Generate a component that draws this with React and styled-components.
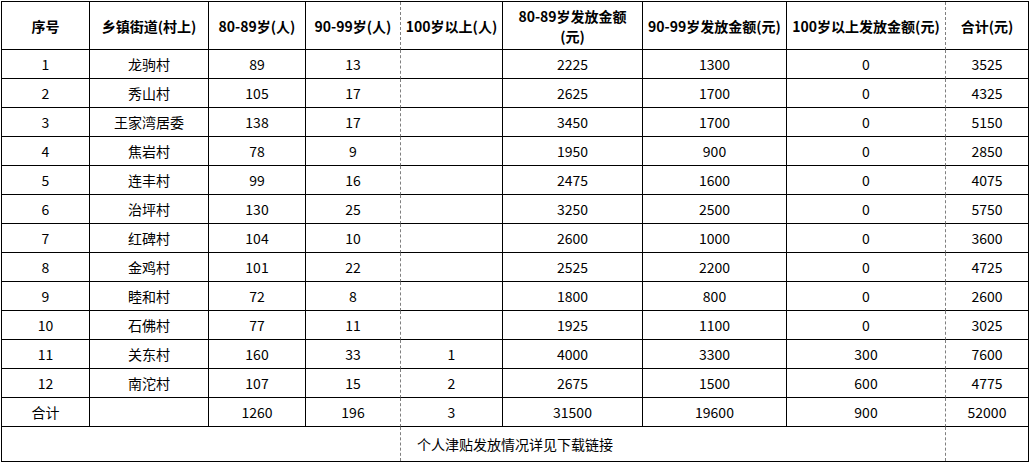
import React from "react";
import styled, { createGlobalStyle, css } from "styled-components";

const Global = createGlobalStyle`
  html, body { margin: 0; padding: 0; background: #ffffff; }
  body { font-family: "Noto Sans CJK SC", "Noto Sans", sans-serif; color: #000; }
`;

const Page = styled.div`
  padding: 1px 0 0 1px;
`;

const Sheet = styled.div`
  display: grid;
  grid-template-columns: 88px 119px 97px 95px 102px 140px 144px 159px 83px;
  width: max-content;
  border-top: 1px solid #000;
  border-left: 1px solid #000;
`;

const Cell = styled.div`
  box-sizing: border-box;
  height: ${(p) => (p.$head ? 48 : 29)}px;
  display: flex;
  align-items: center;
  justify-content: center;
  text-align: center;
  padding: 0 2px;
  font-size: 14px;
  line-height: 20px;
  white-space: nowrap;
  font-weight: ${(p) => (p.$head ? 700 : 400)};
  border-right: 1px solid #000;
  border-bottom: 1px solid #000;
  ${(p) =>
    p.$dashed &&
    css`
      border-right: 1px dashed #7f7f7f;
    `}
`;

const FootCell = styled.div`
  grid-column: 1 / -1;
  position: relative;
  box-sizing: border-box;
  height: 35px;
  display: flex;
  align-items: center;
  justify-content: center;
  font-size: 14px;
  border-right: 1px solid #000;
  border-bottom: 1px solid #000;
`;

const PageBreak = styled.span`
  position: absolute;
  top: 0;
  bottom: 0;
  left: ${(p) => p.$x}px;
  width: 0;
  border-left: 1px dashed #7f7f7f;
`;

const headers = [
  "序号",
  "乡镇街道(村上)",
  "80-89岁(人)",
  "90-99岁(人)",
  "100岁以上(人)",
  <>80-89岁发放金额<br />(元)</>,
  "90-99岁发放金额(元)",
  "100岁以上发放金额(元)",
  "合计(元)",
];

const rows = [
  [1, "龙驹村", 89, 13, "", 2225, 1300, 0, 3525],
  [2, "秀山村", 105, 17, "", 2625, 1700, 0, 4325],
  [3, "王家湾居委", 138, 17, "", 3450, 1700, 0, 5150],
  [4, "焦岩村", 78, 9, "", 1950, 900, 0, 2850],
  [5, "连丰村", 99, 16, "", 2475, 1600, 0, 4075],
  [6, "治坪村", 130, 25, "", 3250, 2500, 0, 5750],
  [7, "红碑村", 104, 10, "", 2600, 1000, 0, 3600],
  [8, "金鸡村", 101, 22, "", 2525, 2200, 0, 4725],
  [9, "睦和村", 72, 8, "", 1800, 800, 0, 2600],
  [10, "石佛村", 77, 11, "", 1925, 1100, 0, 3025],
  [11, "关东村", 160, 33, 1, 4000, 3300, 300, 7600],
  [12, "南沱村", 107, 15, 2, 2675, 1500, 600, 4775],
  ["合计", "", 1260, 196, 3, 31500, 19600, 900, 52000],
];

const dashedCols = [3, 7];

export default function App() {
  return (
    <Page>
      <Global />
      <Sheet>
        {headers.map((h, i) => (
          <Cell key={"h" + i} $head $dashed={dashedCols.includes(i)}>
            <span>{h}</span>
          </Cell>
        ))}
        {rows.map((r, ri) =>
          r.map((v, ci) => (
            <Cell key={ri + "-" + ci} $dashed={dashedCols.includes(ci)}>
              {v}
            </Cell>
          ))
        )}
        <FootCell>
          个人津贴发放情况详见下载链接
          <PageBreak $x={398} />
          <PageBreak $x={943} />
        </FootCell>
      </Sheet>
    </Page>
  );
}
